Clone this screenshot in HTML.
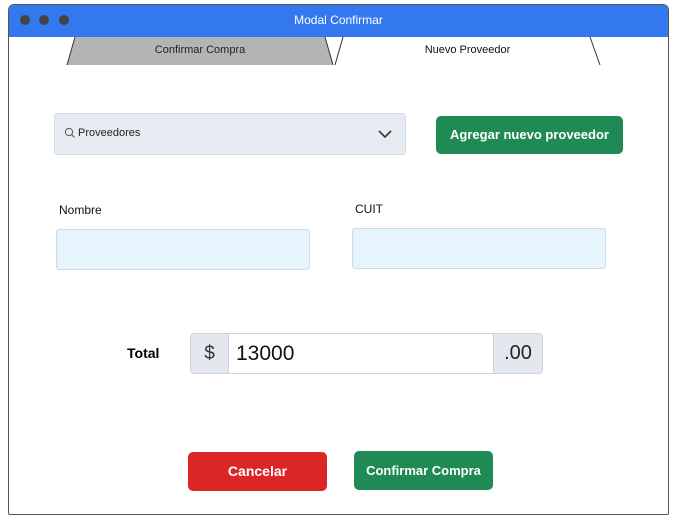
<!DOCTYPE html>
<html><head><style>
body{margin:0;width:680px;height:518px;background:#fff;font-family:"Liberation Sans",sans-serif;position:relative;overflow:hidden}
.win{position:absolute;left:8px;top:4px;width:659px;height:509px;border:1px solid #555;border-radius:6px 6px 2px 2px;overflow:hidden;background:#fff}
.bar{position:absolute;left:0;top:0;width:100%;height:32px;background:#3478f0;color:#fff;font-size:12px;text-align:center;line-height:30px}
.dot{position:absolute;top:10px;width:10px;height:10px;border-radius:50%;background:#444}
.abs{position:absolute}
.in{position:absolute;box-sizing:border-box;background:#e6f4fd;border:1px solid #cfdbe6;border-radius:3px}
.btn{position:absolute;color:#fff;font-size:14px;font-weight:bold;text-align:center;border-radius:5px}
</style></head><body>
<div class="win">
<div class="bar">Modal Confirmar
<div class="dot" style="left:11px"></div><div class="dot" style="left:30px"></div><div class="dot" style="left:50px"></div></div>
</div>
<svg class="abs" style="left:0;top:0" width="680" height="80">
<polygon points="67,65 75,37 325,37 333,65" fill="#b4b4b4"/>
<polyline points="67,65 75,37" stroke="#333" fill="none"/>
<polyline points="325,37 333,65" stroke="#333" fill="none"/>
<line x1="343" y1="37" x2="335" y2="65" stroke="#333"/>
<line x1="590" y1="37" x2="600" y2="65" stroke="#333"/>
</svg>
<div class="abs" style="left:75px;top:44px;width:250px;text-align:center;font-size:11px;color:#222">Confirmar Compra</div>
<div class="abs" style="left:340px;top:44px;width:255px;text-align:center;font-size:11px;color:#111">Nuevo Proveedor</div>
<div class="abs" style="left:54px;top:113px;width:350px;height:40px;background:#e7ecf2;border:1px solid #d6dde4;border-radius:3px"></div>
<svg class="abs" style="left:64px;top:127px" width="12" height="12"><circle cx="5" cy="5" r="3.6" stroke="#555" fill="none"/><line x1="7.6" y1="7.6" x2="10.5" y2="10.5" stroke="#555"/></svg>
<div class="abs" style="left:78px;top:127px;font-size:11px;color:#222">Proveedores</div>
<svg class="abs" style="left:378px;top:129px" width="14" height="10"><polyline points="1,2 7,8 13,2" stroke="#333" stroke-width="1.6" fill="none"/></svg>
<div class="btn" style="left:436px;top:116px;width:187px;height:38px;line-height:38px;background:#1f8a54;font-size:13px">Agregar nuevo proveedor</div>
<div class="abs" style="left:59px;top:203px;font-size:12px;color:#111">Nombre</div>
<div class="abs" style="left:355px;top:202px;font-size:12px;color:#111">CUIT</div>
<div class="in" style="left:56px;top:229px;width:254px;height:41px"></div>
<div class="in" style="left:352px;top:228px;width:254px;height:41px"></div>
<div class="abs" style="left:127px;top:345px;font-size:14px;font-weight:bold">Total</div>
<div class="abs" style="left:190px;top:333px;width:351px;height:39px;border:1px solid #cdd3da;border-radius:4px;overflow:hidden;background:#fff">
<div class="abs" style="left:0;top:0;width:37px;height:39px;background:#e3e8ee;border-right:1px solid #cdd3da;text-align:center;line-height:40px;font-size:19px;color:#333">$</div>
<div class="abs" style="left:45px;top:0;line-height:39px;font-size:21px;color:#111">13000</div>
<div class="abs" style="right:0;top:0;width:48px;height:39px;background:#e3e8ee;border-left:1px solid #cdd3da;text-align:center;line-height:39px;font-size:20px;color:#222">.00</div>
</div>
<div class="btn" style="left:188px;top:452px;width:139px;height:39px;line-height:39px;background:#dc2626">Cancelar</div>
<div class="btn" style="left:354px;top:451px;width:139px;height:39px;line-height:39px;background:#1f8a54;font-size:13px">Confirmar Compra</div>
</body></html>
